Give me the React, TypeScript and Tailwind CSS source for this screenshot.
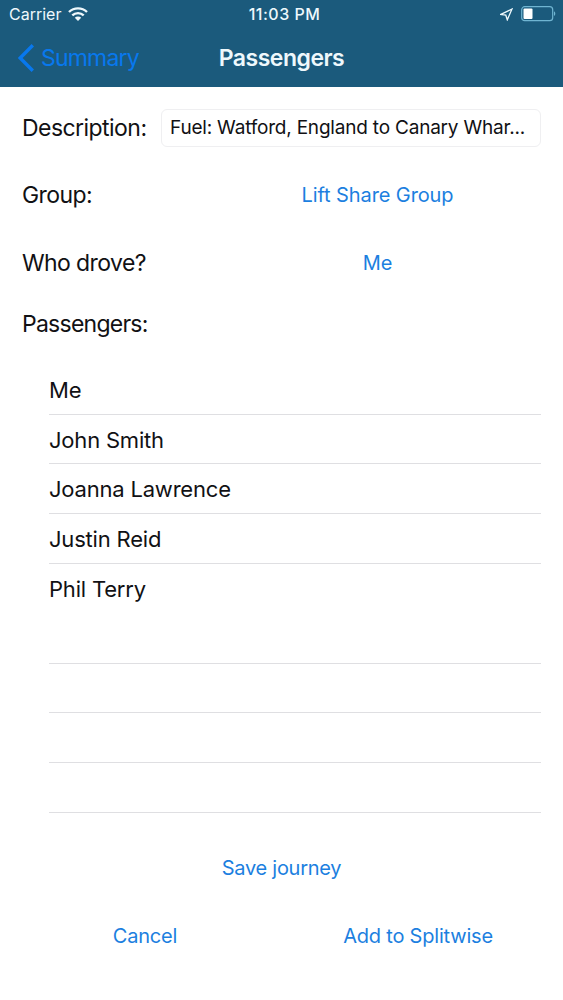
import React from 'react';

const people = ['Me', 'John Smith', 'Joanna Lawrence', 'Justin Reid', 'Phil Terry'];
const emptyRows = [0, 1, 2, 3];

const StatusBar: React.FC = () => (
  <div className="flex h-7 items-center justify-between pl-[9px] pr-[7px] text-[#eef8fc]">
    <div className="flex w-40 items-center gap-[7px] text-[16px]">
      <span>Carrier</span>
      <svg width="20" height="14" viewBox="0 0 20 14" fill="none" stroke="currentColor" strokeWidth="2.4">
        <path d="M1 5a13 13 0 0 1 18 0M4.3 8.4a8.2 8.2 0 0 1 11.4 0" />
        <path d="M10 14 6.8 10.8a4.6 4.6 0 0 1 6.4 0z" fill="currentColor" stroke="none" />
      </svg>
    </div>
    <span className="pl-1 text-[16px] font-medium tracking-[0.5px]">11:03 PM</span>
    <div className="flex w-40 items-center justify-end gap-2">
      <svg width="13" height="13" viewBox="0 0 13 13" fill="none" stroke="currentColor" strokeWidth="1.3">
        <path d="M12 1 .9 6.4l4.9.8 1.5 4.6z" />
      </svg>
      <svg width="35" height="16" viewBox="0 0 35 16" fill="none">
        <rect x="0.7" y="0.7" width="31" height="14" rx="3" stroke="#70b5d2" strokeWidth="1.2" />
        <rect x="2.5" y="2.5" width="9" height="10.5" rx="1" fill="white" />
        <path d="M33 5.3c1.8.8 1.8 4 0 4.8z" fill="#70b5d2" />
      </svg>
    </div>
  </div>
);

const Field: React.FC<{ label: string; value: string }> = ({ label, value }) => (
  <div className="flex items-center">
    <span className="w-[192px] text-[23px] tracking-[-0.6px]">{label}</span>
    <button className="flex-1 text-center text-[20px] tracking-[-0.1px] text-[#1c7fe0]">{value}</button>
  </div>
);

export default function App() {
  return (
    <div className="flex h-[1000px] w-[563px] flex-col overflow-hidden bg-white font-['Inter',sans-serif] text-[#111114]">
      <header className="h-[87px] shrink-0 bg-[#1b5a7c]">
        <StatusBar />
        <nav className="grid h-[60px] grid-cols-3 items-center">
          <button className="flex items-center gap-[7px] pl-[18px] text-[23px] tracking-[-0.8px] text-[#0878ee]">
            <svg width="16" height="28" viewBox="0 0 16 28" fill="none" stroke="currentColor" strokeWidth="3.4">
              <path d="M14.8 1.2 2.2 14l12.6 12.8" />
            </svg>
            Summary
          </button>
          <h1 className="text-center text-[23px] font-semibold tracking-[-0.5px] text-[#eef8fc]">Passengers</h1>
        </nav>
      </header>

      <main className="flex flex-col px-[22px] pt-[22px]">
        <div className="flex h-[38px] items-center gap-[14px]">
          <span className="w-[125px] shrink-0 pt-px text-[23px] tracking-[-0.55px]">Description:</span>
          <div className="flex h-[38px] min-w-0 flex-1 items-center rounded-md border border-[#efeff1] px-2 text-[19px] tracking-[-0.2px]">
            <span className="whitespace-nowrap">Fuel: Watford, England to Canary Whar...</span>
          </div>
        </div>

        <div className="pt-[31px]">
          <Field label="Group:" value="Lift Share Group" />
        </div>
        <div className="pt-[33px]">
          <Field label="Who drove?" value="Me" />
        </div>
        <h2 className="pt-[27px] text-[23px] tracking-[-0.75px]">Passengers:</h2>

        {/* Passenger list, padded out with blank rows */}
        <ul className="ml-[27px] mt-[23.4px]">
          {people.map((name, i) => (
            <li
              key={name}
              className={`flex h-[49.8px] items-center pt-[2px] text-[22px] tracking-[-0.2px] ${
                i < people.length - 1 ? 'border-b border-[#dfdfe2]' : ''
              }`}
            >
              {name}
            </li>
          ))}
          {emptyRows.map(row => (
            <li key={row} className="h-[49.8px] border-b border-[#dfdfe2]" />
          ))}
        </ul>

        <div className="flex justify-center pt-[40px]">
          <button className="text-[20px] tracking-[-0.28px] text-[#1c7fe0]">Save journey</button>
        </div>
        <div className="flex pt-[38px] text-[20px] tracking-[-0.2px] text-[#1c7fe0]">
          <button className="w-[246px]">Cancel</button>
          <button className="flex-1 pl-[27px]">Add to Splitwise</button>
        </div>
      </main>
    </div>
  );
}
